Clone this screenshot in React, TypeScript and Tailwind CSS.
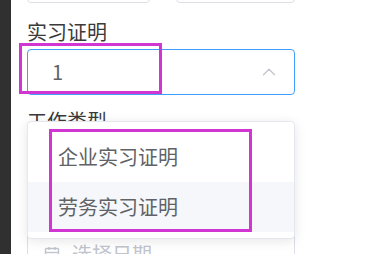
import { ChevronUp } from "lucide-react";

const font = { fontFamily: '"Noto Sans CJK SC", "Noto Sans", sans-serif' };

function CalendarIcon() {
  return (
    <svg width="16" height="16" viewBox="0 0 16 16" fill="none" stroke="#c0c4cc" strokeWidth="1.4">
      <rect x="1.5" y="2.5" width="13" height="12" rx="1" />
      <line x1="1.5" y1="6.5" x2="14.5" y2="6.5" />
      <line x1="5" y1="1" x2="5" y2="4" />
      <line x1="11" y1="1" x2="11" y2="4" />
    </svg>
  );
}

export default function App() {
  const options = ["企业实习证明", "劳务实习证明"];

  return (
    <div className="flex h-[254px] w-[390px] overflow-hidden bg-white" style={font}>
      {/* dark side strip */}
      <div className="w-[11px] shrink-0 bg-[#303030]" />

      <div className="flex w-[268px] flex-col pl-4 box-content">
        {/* row of inputs scrolled off the top */}
        <div className="-mt-[43px] flex shrink-0 gap-[26px]">
          <div className="h-[46px] w-[123px] rounded border border-[#dcdfe6]" />
          <div className="h-[46px] w-[120px] rounded border border-[#dcdfe6]" />
        </div>

        {/* 实习证明 */}
        <div className="mt-[15px] shrink-0 text-[20px] leading-[28px] text-[#3a3a3a]">实习证明</div>
        <div className="relative mt-[3px] shrink-0">
          <div className="flex h-[46px] items-center justify-between rounded border border-[#409eff] pl-6 pr-[14px]">
            <span className="text-[20px] text-[#606266]">1</span>
            <ChevronUp size={22} strokeWidth={1.3} className="text-[#c0c4cc]" />
          </div>
          <div className="pointer-events-none absolute -left-[8px] -top-[6px] h-[51px] w-[143px] border-[3px] border-[#d236d2]" />

          {/* dropdown popper */}
          <div className="absolute left-0 top-[72px] z-10 w-[268px] rounded border border-[#e4e7ed] bg-white pb-[6px] pt-[10px] shadow-[0_2px_12px_rgba(0,0,0,0.1)]">
            {options.map((o, i) => (
              <div
                key={o}
                className={`flex h-[50px] items-center pl-[30px] text-[20px] text-[#606266] ${i === 1 ? "bg-[#f5f7fa]" : ""}`}
              >
                {o}
              </div>
            ))}
            <div className="pointer-events-none absolute left-[21px] top-[7px] h-[103px] w-[203px] border-[3px] border-[#d236d2]" />
          </div>
        </div>

        {/* 工作类型 */}
        <div className="mt-[12px] shrink-0 text-[20px] leading-[28px] text-[#3a3a3a]">工作类型</div>
        <div className="mt-[3px] h-[46px] shrink-0 rounded border border-[#dcdfe6]" />

        {/* date field (its label sits under the dropdown) */}
        <div className="mt-[16px] h-[28px] shrink-0" />
        <div className="mt-[3px] flex h-[46px] shrink-0 items-center gap-3 rounded border border-[#dcdfe6] px-4">
          <CalendarIcon />
          <span className="text-[20px] text-[#c0c4cc]">选择日期</span>
        </div>
      </div>
    </div>
  );
}
